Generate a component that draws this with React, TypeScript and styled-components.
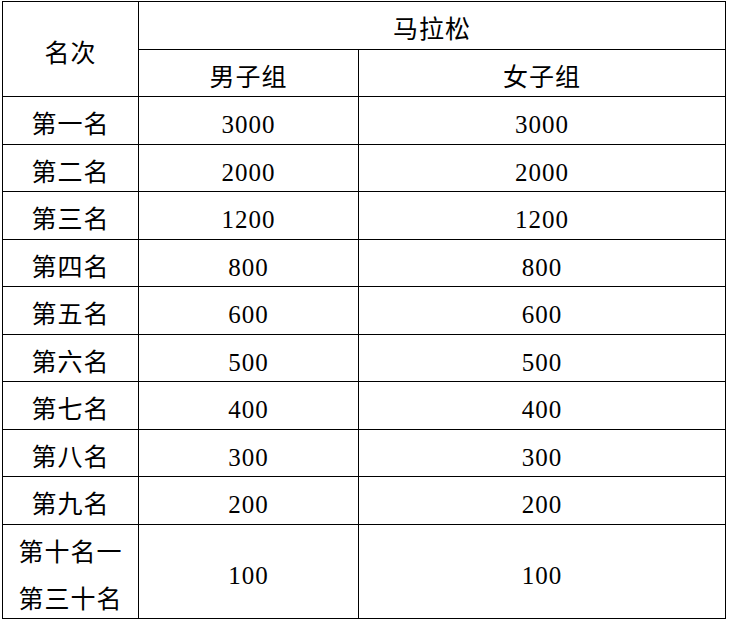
import styled, { createGlobalStyle } from 'styled-components';

const GlobalStyle = createGlobalStyle`
	html, body {
		margin: 0;
		padding: 0;
		background: #ffffff;
	}
`;

type Prize = { place: string; men: string; women: string };

const prizes: Prize[] = [
	{ place: '第一名', men: '3000', women: '3000' },
	{ place: '第二名', men: '2000', women: '2000' },
	{ place: '第三名', men: '1200', women: '1200' },
	{ place: '第四名', men: '800', women: '800' },
	{ place: '第五名', men: '600', women: '600' },
	{ place: '第六名', men: '500', women: '500' },
	{ place: '第七名', men: '400', women: '400' },
	{ place: '第八名', men: '300', women: '300' },
	{ place: '第九名', men: '200', women: '200' },
	{ place: '第十名一\n第三十名', men: '100', women: '100' },
];

const App = () => {
	return (
		<SPage>
			<GlobalStyle />
			<PrizeGrid>
				<Cell $rowSpan={2}>名次</Cell>
				<Cell $colSpan={2}>马拉松</Cell>
				<Cell>男子组</Cell>
				<Cell>女子组</Cell>
				{prizes.map((p) => (
					<Row key={p.place} p={p} />
				))}
			</PrizeGrid>
		</SPage>
	);
};

const Row = ({ p }: { p: Prize }) => {
	const lines = p.place.split('\n');
	return (
		<>
			<Cell $multiLine={lines.length > 1}>
				{lines.map((l) => (
					<span key={l}>{l}</span>
				))}
			</Cell>
			<Cell>{p.men}</Cell>
			<Cell>{p.women}</Cell>
		</>
	);
};

export default App;

const SPage = styled.div`
	padding: 1px 0 0 2px;
`;

const PrizeGrid = styled.div`
	display: grid;
	width: max-content;
	grid-template-columns: 135px 219px 366px;
	grid-template-rows: 47px 46px 47px 46px 47px 46px 47px 46px 47px 46px 47px 93px;
	gap: 1px;
	padding: 1px;
	background: #000000;
`;

const Cell = styled.div<{ $rowSpan?: number; $colSpan?: number; $multiLine?: boolean }>`
	grid-row: span ${(p) => p.$rowSpan ?? 1};
	grid-column: span ${(p) => p.$colSpan ?? 1};
	background: #ffffff;
	display: flex;
	flex-direction: column;
	align-items: center;
	justify-content: center;
	padding-top: ${(p) => (p.$multiLine ? '8px' : '9px')};
	box-sizing: border-box;
	color: #000000;
	font-family: 'Liberation Serif', 'Noto Sans CJK SC', serif;
	font-size: 25px;
	line-height: ${(p) => (p.$multiLine ? '47px' : '30px')};
	letter-spacing: 1px;
	white-space: nowrap;
`;
